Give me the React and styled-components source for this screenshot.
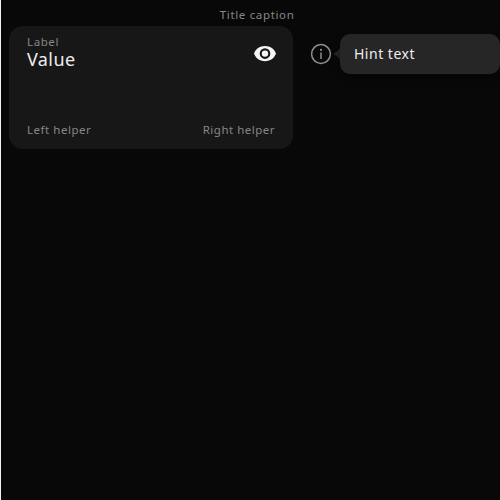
import React from "react";
import styled, { createGlobalStyle } from "styled-components";

const GlobalStyle = createGlobalStyle`
  * { box-sizing: border-box; }
  body { margin: 0; background: #080808; overflow: hidden; font-family: "Noto Sans", sans-serif; }
`;

const Page = styled.main`
  height: 100vh;
  padding: 8px 0 0 8px;
  border-left: 1px solid #f2f2f2;
  background: #080808;
`;

const Field = styled.section`
  width: 285.5px;
`;

const Text = styled.span`
  display: block;
  width: max-content;
  white-space: nowrap;
  font-weight: 400;
  font-size: ${({ $size }) => $size || 11.5}px;
  line-height: ${({ $line }) => $line || 14}px;
  letter-spacing: ${({ $spacing }) => $spacing || 0}px;
  color: ${({ $color }) => $color || "#868686"};
`;

const Title = styled(Text)`
  margin: 0 0 4px auto;
`;

const Row = styled.div`
  display: flex;
  align-items: flex-start;
`;

const Card = styled.div`
  flex: none;
  display: flex;
  flex-direction: column;
  justify-content: space-between;
  width: 284px;
  height: 123px;
  padding: 8px 18px 12px;
  border-radius: 14px;
  background: #171717;
`;

const Line = styled.div`
  display: flex;
  justify-content: space-between;
`;

const EyeButton = styled.button`
  width: 24px;
  height: 24px;
  margin: 8px -2px 0 0;
  padding: 0;
  border: 0;
  background: none;
  color: #f5f5f5;
`;

const Icon = styled.svg`
  display: block;
  width: 24px;
  height: 24px;
`;

const HintTarget = styled.div`
  display: flex;
  align-items: center;
  height: 40px;
  margin: 8px 0 0 16px;
  color: #8f8f8f;
`;

const Arrow = styled.svg`
  display: block;
  flex: none;
  width: 7px;
  height: 20px;
  color: #262626;
`;

const Tooltip = styled.div`
  flex: none;
  display: flex;
  align-items: center;
  width: 160px;
  height: 40px;
  padding: 0 14px;
  border-radius: 10px;
  background: #262626;
  box-shadow: 0 4px 12px rgba(0, 0, 0, 0.3);
`;

export default function App() {
  return (
    <>
      <GlobalStyle />
      <Page>
        <Field>
          <Title $spacing={0.66}>Title caption</Title>
        </Field>
        <Row>
          <Card>
            <Line>
              <div>
                <Text $spacing={0.6} $line={15}>Label</Text>
                <Text $size={18} $line={21} $spacing={0.4} $color="#ededed">Value</Text>
              </div>
              <EyeButton aria-label="Show value">
                <Icon viewBox="0 0 24 24">
                  <path
                    fill="currentColor"
                    fillRule="evenodd"
                    d="M12 4C6.5 4 2.5 7.1 1 11.6c1.5 4.5 5.5 7.6 11 7.6s9.5-3.1 11-7.6C21.500 7.1 17.500 4 12 4zM12 16.900a5.300 5.300 0 1 1 0-10.600 5.300 5.300 0 0 1 0 10.600zm0-8.500a3.200 3.200 0 1 0 0 6.400 3.200 3.200 0 0 0 0-6.400z"
                  />
                </Icon>
              </EyeButton>
            </Line>
            <Line>
              <Text $spacing={0.53}>Left helper</Text>
              <Text $spacing={0.5}>Right helper</Text>
            </Line>
          </Card>
          <HintTarget>
            <Icon viewBox="0 0 24 24">
              <circle cx="12" cy="12" r="9.4" fill="none" stroke="currentColor" strokeWidth="1.5" />
              <circle cx="12" cy="7.9" r="1.1" fill="currentColor" />
              <path d="M12 10.4v6.6" stroke="currentColor" strokeWidth="1.5" />
            </Icon>
            <Arrow viewBox="0 0 7 20">
              <path fill="currentColor" d="M7 2C7 6 4 7.700 1.200 9.200c-.8.4-.8 1.200 0 1.600C4 12.300 7 14 7 18z" />
            </Arrow>
            <Tooltip>
              <Text $size={14} $line={18} $spacing={0.5} $color="#ededed">Hint text</Text>
            </Tooltip>
          </HintTarget>
        </Row>
      </Page>
    </>
  );
}
